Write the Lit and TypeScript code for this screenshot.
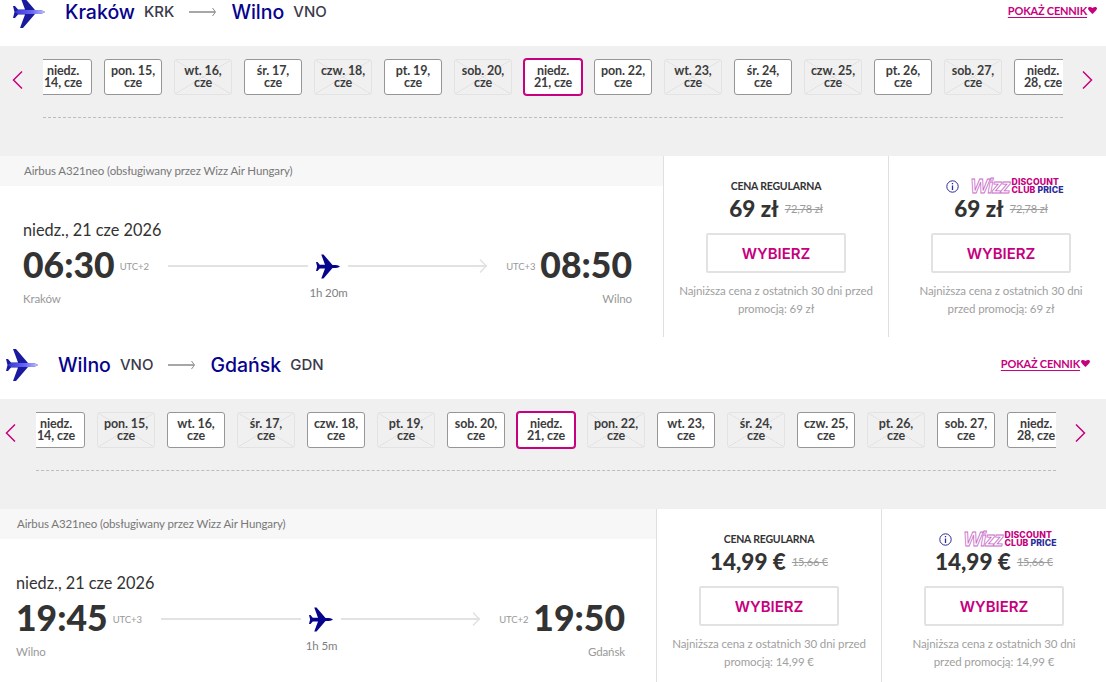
import { LitElement, html, css } from "lit";
import { customElement } from "lit/decorators.js";

const PLANE_WINGS =
  "M32 16C30 14.5 27 14 24 14H22L10 0H7L12 13.5H5L2 10H0L1.5 16L0 22H2L5 18.5H12L7 32H10L22 18H24C27 18 30 17.5 32 16Z";

interface Day { label: [string, string]; state: "on" | "off" | "sel"; }
interface Fare { price: string; old: string; note: [string, string]; }
interface Flight {
  cls: string; gid: string; from: string; fromCode: string; to: string; toCode: string;
  dep: string; depTz: string; arr: string; arrTz: string; dur: string;
  offMask: string; reg: Fare; club: Fare;
}

const NAMES: [string, string][] = [
  ["niedz.", "14, cze"], ["pon. 15,", "cze"], ["wt. 16,", "cze"], ["śr. 17,", "cze"], ["czw. 18,", "cze"],
  ["pt. 19,", "cze"], ["sob. 20,", "cze"], ["niedz.", "21, cze"], ["pon. 22,", "cze"], ["wt. 23,", "cze"],
  ["śr. 24,", "cze"], ["czw. 25,", "cze"], ["pt. 26,", "cze"], ["sob. 27,", "cze"], ["niedz.", "28, cze"],
];

const days = (mask: string): Day[] =>
  NAMES.map((label, i) => ({
    label,
    state: mask[i] === "x" ? "off" : mask[i] === "s" ? "sel" : "on",
  }));

const FLIGHTS: Flight[] = [
  {
    cls: "first", gid: "g1", from: "Kraków", fromCode: "KRK", to: "Wilno", toCode: "VNO",
    dep: "06:30", depTz: "UTC+2", arr: "08:50", arrTz: "UTC+3", dur: "1h 20m",
    offMask: "ooxoxoxsoxoxoxo",
    reg: { price: "69 zł", old: "72,78 zł", note: ["Najniższa cena z ostatnich 30 dni przed", "promocją: 69 zł"] },
    club: { price: "69 zł", old: "72,78 zł", note: ["Najniższa cena z ostatnich 30 dni", "przed promocją: 69 zł"] },
  },
  {
    cls: "second", gid: "g2", from: "Wilno", fromCode: "VNO", to: "Gdańsk", toCode: "GDN",
    dep: "19:45", depTz: "UTC+3", arr: "19:50", arrTz: "UTC+2", dur: "1h 5m",
    offMask: "oxoxoxosxoxoxoo",
    reg: { price: "14,99 €", old: "15,66 €", note: ["Najniższa cena z ostatnich 30 dni przed", "promocją: 14,99 €"] },
    club: { price: "14,99 €", old: "15,66 €", note: ["Najniższa cena z ostatnich 30 dni", "przed promocją: 14,99 €"] },
  },
];

@customElement("app-root")
export class AppRoot extends LitElement {
  static styles = css`
    :host {
      display: block;
      width: 1106px;
      height: 682px;
      overflow: hidden;
      background: #fff;
      font-family: "Lato", "Noto Sans", sans-serif;
      color: #333;
    }
    .section { width: calc(1106px + var(--shift)); }
    .first { --shift: 7px; margin-top: -16px; }
    .second { --shift: 0px; }

    .head {
      height: 62px;
      display: flex;
      align-items: center;
      padding-left: calc(6px + var(--shift));
      padding-right: 16px;
      padding-bottom: 7px;
      box-sizing: border-box;
    }
    .logo { width: 32px; height: 32px; flex: none; margin-right: 20px; }
    .city {
      font-family: "Inter", sans-serif;
      font-weight: 500;
      font-size: 19.5px;
      color: #06038d;
    }
    .code {
      font-family: "Inter", sans-serif;
      font-weight: 500;
      font-size: 15px;
      color: #3a3a4a;
      margin-left: 9px;
    }
    .head-arrow { width: 27px; height: 10px; margin: 0 15px; flex: none; }
    .show {
      margin-left: auto;
      display: flex;
      align-items: center;
      gap: 1px;
      color: #c6007e;
      font-weight: 700;
      font-size: 11px;
      letter-spacing: -0.2px;
      margin-top: -3px;
    }
    .show span { text-decoration: underline; text-underline-offset: 2px; }
    .show svg { width: 9px; height: 7px; }

    .strip {
      height: 110px;
      box-sizing: border-box;
      background: #f0f0f0;
      padding: 12px 0 0 var(--shift);
      display: flex;
      align-items: flex-start;
    }
    .nav { flex: none; padding-top: 13px; display: flex; }
    .nav svg { width: 11px; height: 18px; }
    .nav.prev { width: 36px; padding-left: 5px; box-sizing: border-box; }
    .nav.next { padding-left: 19px; }
    .track-wrap { width: 1020px; flex: none; }
    .track { overflow: hidden; padding: 1px 0; display: flex; gap: 12px; }
    .days { display: flex; gap: 12px; margin-left: -9px; }
    .day {
      width: 58px;
      height: 36px;
      flex: none;
      box-sizing: border-box;
      border: 1px solid #969696;
      border-radius: 3px;
      background: #fff;
      display: flex;
      flex-direction: column;
      align-items: center;
      justify-content: center;
      font-size: 12.5px;
      line-height: 12px;
      letter-spacing: -0.1px;
      font-weight: 700;
      color: #3c3c3c;
      white-space: nowrap;
    }
    .day.off {
      border-color: #e3e3e3;
      background:
        linear-gradient(to top right, transparent calc(50% - 0.6px), #dcdcdc, transparent calc(50% + 0.6px)),
        linear-gradient(to bottom right, transparent calc(50% - 0.6px), #dcdcdc, transparent calc(50% + 0.6px));
    }
    .day.sel { border-color: #c6007e; box-shadow: 0 0 0 1px #c6007e; }
    .dash { margin-top: 21px; border-top: 1px dashed #bdbdbd; }

    .card { display: flex; height: 181px; }
    .info { width: calc(656px + var(--shift)); flex: none; }
    .bar {
      height: 30px;
      box-sizing: border-box;
      background: #f7f7f7;
      padding-left: calc(17px + var(--shift));
      font-size: 11.5px;
      letter-spacing: -0.12px;
      line-height: 29px;
      color: #777;
    }
    .route {
      padding: 33px 31px 0 calc(16px + var(--shift));
    }
    .date { font-size: 16.3px; line-height: 22px; color: #333; }
    .times { display: flex; align-items: flex-start; margin-top: 5px; }
    .edge { width: 122px; flex: none; }
    .edge.right { text-align: right; }
    .row { display: flex; align-items: center; gap: 5px; height: 40px; }
    .edge.right .row { justify-content: flex-end; }
    .time { font-size: 35.5px; font-weight: 900; line-height: 40px; color: #333; margin-top: -2px; }
    .tz { font-size: 9.5px; letter-spacing: -0.1px; color: #999; }
    .place { font-size: 11.5px; letter-spacing: -0.12px; color: #999; margin-top: 5px; line-height: 16px; }
    .mid { flex: 1; margin: 0 21px 0 23px; text-align: center; }
    .mid-row { display: flex; align-items: center; gap: 8px; height: 40px; }
    .line { flex: 1; height: 2px; background: #e2e2e2; position: relative; }
    .line.tail { margin-right: 2px; }
    .tip {
      position: absolute;
      right: 0;
      top: -6px;
      width: 8px;
      height: 14px;
    }
    .plane { width: 24px; height: 25px; flex: none; }
    .dur { font-size: 11.5px; letter-spacing: -0.12px; color: #808080; line-height: 16px; margin-top: -1px; }

    .fare {
      width: 225px;
      flex: none;
      box-sizing: border-box;
      border-left: 1px solid #e0e0e0;
      display: flex;
      flex-direction: column;
      align-items: center;
      padding-top: 22px;
    }
    .fare-head { height: 16px; display: flex; align-items: center; gap: 11px; }
    .fare-head.with-badge { margin-left: 8px; }
    .fare-title { font-size: 10.5px; letter-spacing: -0.2px; font-weight: 700; color: #333; }
    .info-i { width: 13px; height: 13px; flex: none; }
    .badge { display: flex; align-items: center; gap: 2px; }
    .wizz {
      font-family: "Liberation Sans", sans-serif;
      font-size: 19.5px;
      line-height: 16px;
      font-style: italic;
      font-weight: 700;
      color: #fff;
      -webkit-text-stroke: 0.8px #c86ac8;
      letter-spacing: -1px;
    }
    .club {
      font-family: "Inter", sans-serif;
      font-size: 8.7px;
      letter-spacing: 0.1px;
      line-height: 8px;
      font-weight: 800;
      color: #c6007e;
      white-space: nowrap;
    }
    .club b { color: #2b2b9c; font-weight: 800; }
    .price { display: flex; align-items: center; gap: 6px; height: 30px; margin-top: -1px; }
    .amount { font-size: 22.5px; font-weight: 900; color: #333; }
    .old { font-size: 11px; letter-spacing: -0.15px; color: #9c9c9c; text-decoration: line-through; }
    .choose {
      margin-top: 10px;
      width: 140px;
      height: 40px;
      box-sizing: border-box;
      border: 2px solid #e2e2e2;
      border-radius: 2px;
      padding-top: 1px;
      display: flex;
      align-items: center;
      justify-content: center;
      font-family: "Inter", sans-serif;
      font-weight: 600;
      font-size: 15px;
      color: #c6007e;
    }
    .note {
      margin-top: 9px;
      font-size: 11.5px;
      letter-spacing: -0.1px;
      line-height: 18px;
      color: #a0a0a0;
      text-align: center;
      white-space: nowrap;
    }
  `;

  private logo(id: string) {
    return html`<svg class="logo" viewBox="0 0 32 32">
      <defs>
        <linearGradient id=${id} x1="0" x2="1" y1="0" y2="0">
          <stop offset="0" stop-color="#3535d8"></stop>
          <stop offset="0.6" stop-color="#6a6af5"></stop>
          <stop offset="1" stop-color="#c4c4ff"></stop>
        </linearGradient>
      </defs>
      <path d=${PLANE_WINGS} fill="#1a1a9e"></path>
      <path d="M32 16C30 14.5 27 14 24 14H5L1.500 16L5 18H24C27 18 30 17.500 32 16Z" fill="url(#${id})"></path>
    </svg>`;
  }

  private fare(f: Fare, club: boolean) {
    return html`<div class="fare">
      <div class="fare-head ${club ? "with-badge" : ""}">
        ${club
          ? html`<svg class="info-i" viewBox="0 0 13 13" fill="none" stroke="#2b2b9c">
                <circle cx="6.500" cy="6.500" r="5.700"></circle>
                <path d="M6.500 5.500V10M6.500 3V4.200" stroke-width="1.300"></path>
              </svg>
              <div class="badge">
                <span class="wizz">Wizz</span>
                <span class="club">DISCOUNT<br />CLUB <b>PRICE</b></span>
              </div>`
          : html`<span class="fare-title">CENA REGULARNA</span>`}
      </div>
      <div class="price"><span class="amount">${f.price}</span><span class="old">${f.old}</span></div>
      <div class="choose">WYBIERZ</div>
      <div class="note">${f.note[0]}<br />${f.note[1]}</div>
    </div>`;
  }

  private section(f: Flight) {
    return html`<section class="section ${f.cls}">
      <div class="head">
        ${this.logo(f.gid)}
        <span class="city">${f.from}</span><span class="code">${f.fromCode}</span>
        <svg class="head-arrow" viewBox="0 0 27 10" fill="none" stroke="#8a8a8a">
          <path d="M0 5H26" stroke-width="1.500"></path>
          <path d="M23.500 1L26.500 5L23.500 9" stroke-width="1"></path>
        </svg>
        <span class="city">${f.to}</span><span class="code">${f.toCode}</span>
        <div class="show">
          <span>POKAŻ CENNIK</span>
          <svg viewBox="0 0 9 7"><path d="M0 1.500C0 0 2.500 -.5 4.500 1C6.500 -.5 9 0 9 1.500C9 3 6 5.500 4.500 7C3 5.500 0 3 0 1.500Z" fill="#c6007e"></path></svg>
        </div>
      </div>
      <div class="strip">
        <div class="nav prev">
          <svg viewBox="0 0 11 18" fill="none" stroke="#c6007e" stroke-width="1.500"><path d="M10 .5L1.500 9L10 17.500"></path></svg>
        </div>
        <div class="track-wrap">
          <div class="track">
            <div class="days">
              ${days(f.offMask).map(
                (d) => html`<div class="day ${d.state}"><span>${d.label[0]}</span><span>${d.label[1]}</span></div>`
              )}
            </div>
          </div>
          <div class="dash"></div>
        </div>
        <div class="nav next">
          <svg viewBox="0 0 11 18" fill="none" stroke="#c6007e" stroke-width="1.500"><path d="M1 .5L9.500 9L1 17.500"></path></svg>
        </div>
      </div>
      <div class="card">
        <div class="info">
          <div class="bar">Airbus A321neo (obsługiwany przez Wizz Air Hungary)</div>
          <div class="route">
            <div class="date">niedz., 21 cze 2026</div>
            <div class="times">
              <div class="edge">
                <div class="row"><span class="time">${f.dep}</span><span class="tz">${f.depTz}</span></div>
                <div class="place">${f.from}</div>
              </div>
              <div class="mid">
                <div class="mid-row">
                  <div class="line"></div>
                  <svg class="plane" viewBox="0 0 32 32"><path d=${PLANE_WINGS} fill="#06038d"></path></svg>
                  <div class="line tail">
                    <svg class="tip" viewBox="0 0 8 14" fill="none" stroke="#e2e2e2" stroke-width="1.500"><path d="M1 .5L7.200 7L1 13.500"></path></svg>
                  </div>
                </div>
                <div class="dur">${f.dur}</div>
              </div>
              <div class="edge right">
                <div class="row"><span class="tz">${f.arrTz}</span><span class="time">${f.arr}</span></div>
                <div class="place">${f.to}</div>
              </div>
            </div>
          </div>
        </div>
        ${this.fare(f.reg, false)} ${this.fare(f.club, true)}
      </div>
    </section>`;
  }

  render() {
    return html`${FLIGHTS.map((f) => this.section(f))}`;
  }
}
